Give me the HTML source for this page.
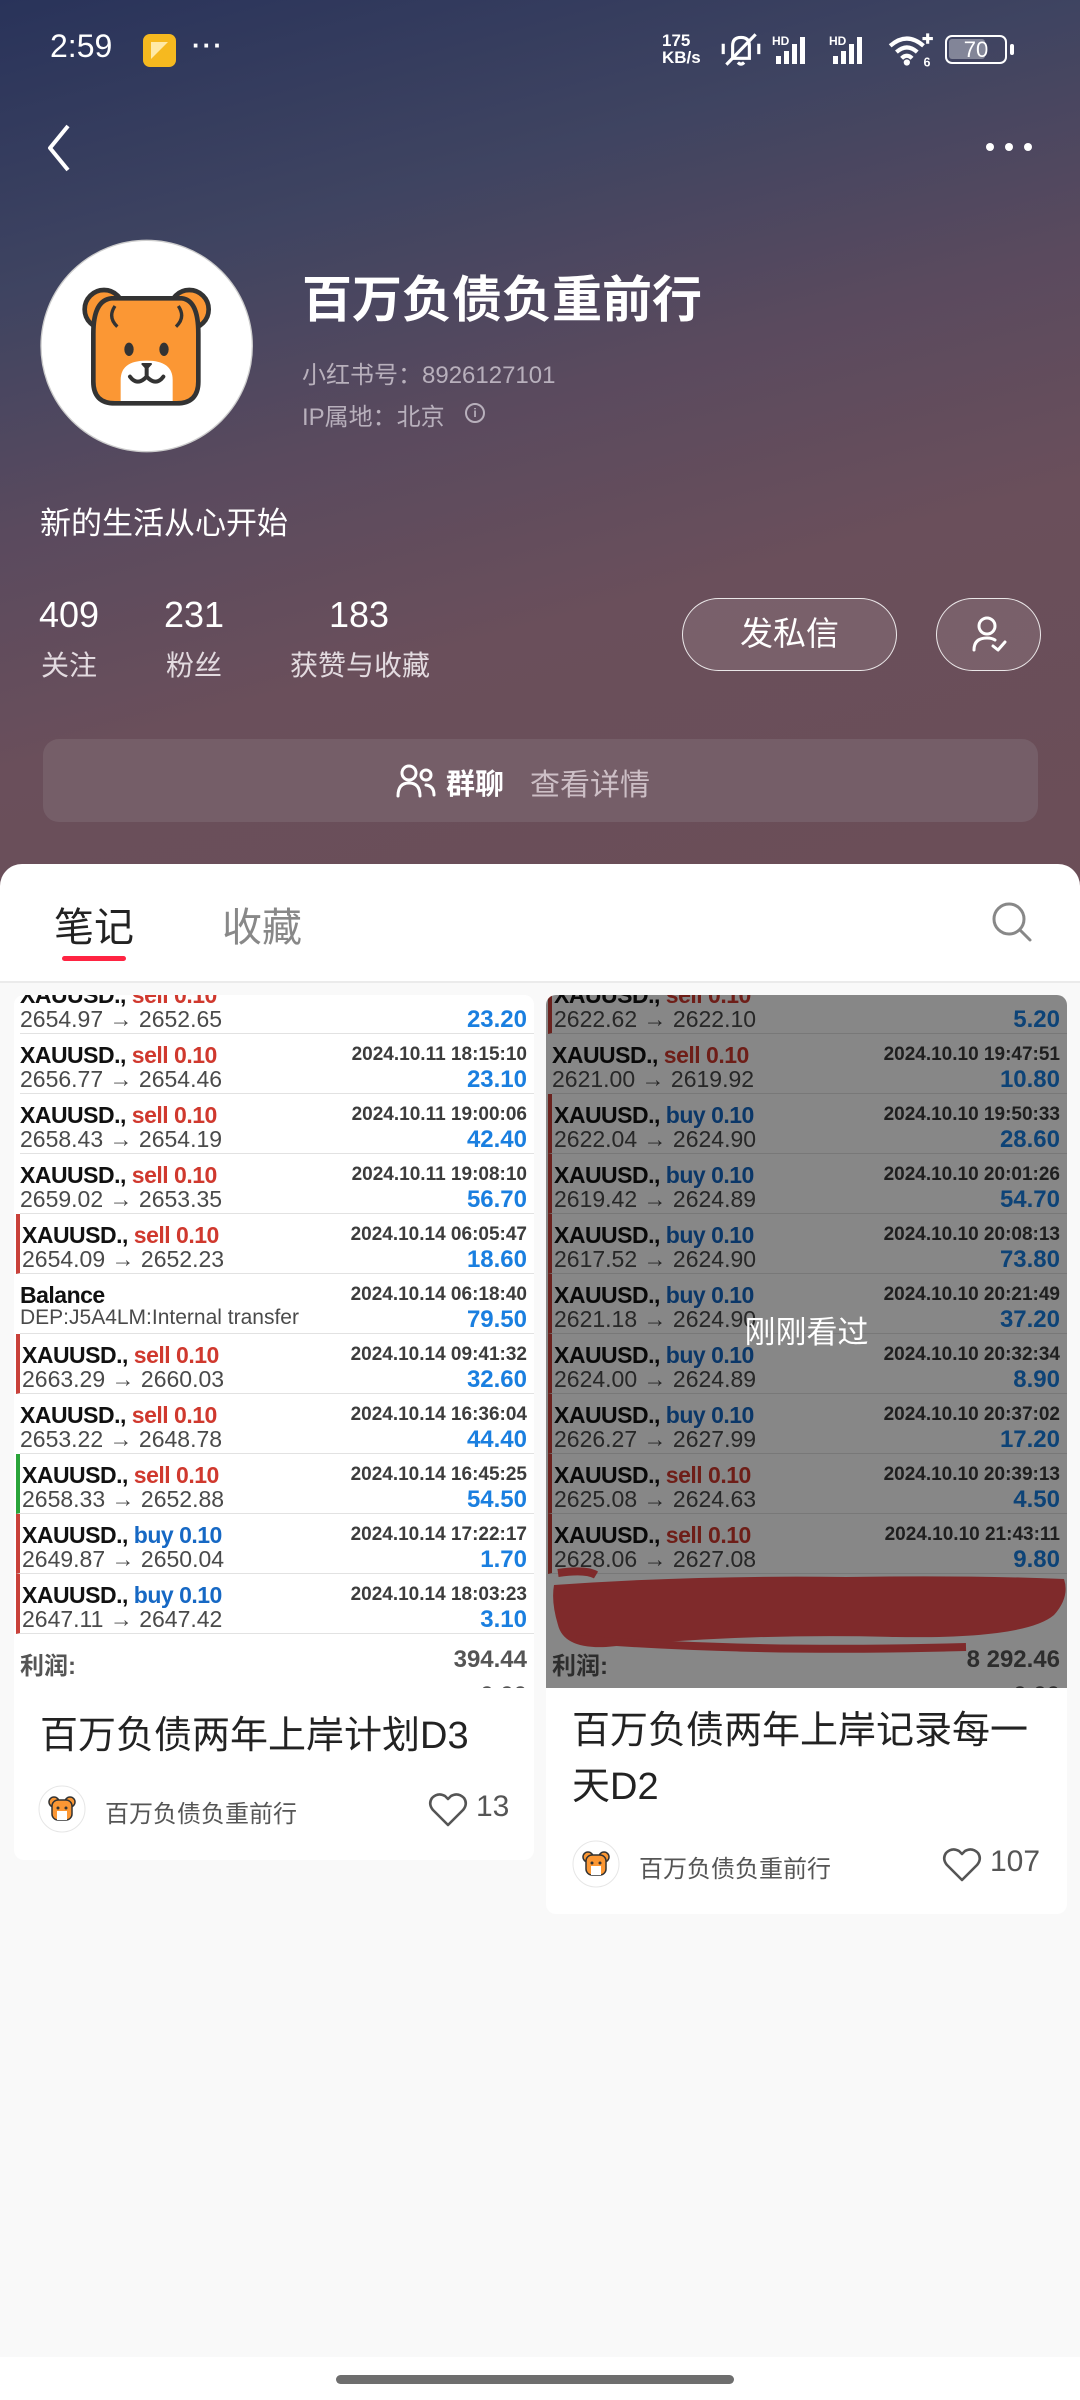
<!DOCTYPE html>
<html><head><meta charset="utf-8">
<style>
*{margin:0;padding:0;box-sizing:border-box}
body{width:1080px;height:2400px;position:relative;overflow:hidden;background:#f9f9f9;font-family:"Liberation Sans","Noto Sans CJK SC",sans-serif}
.hdr{position:absolute;left:0;top:0;width:1080px;height:900px;background:linear-gradient(165deg,#29335a 0%,#3f4461 25%,#5a4a5e 45%,#6a4f5b 65%,#6b4e57 100%)}
.a{position:absolute}
.w{color:#fff}
.card{position:absolute;background:#fff;border-radius:10px;overflow:hidden}
.img{position:absolute;left:0;top:0;width:520px;height:693px;overflow:hidden;background:#fff}
.rows{position:absolute;left:0;top:-21px;width:100%}
.r{position:relative;height:60px;margin-left:6px;border-bottom:1.5px solid #e2e2e2}
.r.bl{border-left:4px solid #c9413a;margin-left:2px}
.r.bg{border-left:4px solid #2aa43a;margin-left:2px}
.t{position:absolute;left:0;top:8px;font:bold 23px "Liberation Sans Narrow","Liberation Sans",sans-serif;color:#111;letter-spacing:-0.5px}
.r.bl .t,.r.bg .t,.r.bl .b,.r.bg .b{left:2px}
.s{color:#d0392e}.u{color:#1668c4}
.d{position:absolute;right:7px;top:10px;font:bold 19px "Liberation Sans Narrow","Liberation Sans",sans-serif;color:#3c3c3c}
.b{position:absolute;left:0;top:32px;font:23px "Liberation Sans",sans-serif;color:#4a4a4a}
.p{position:absolute;right:7px;top:32px;font:bold 24px "Liberation Sans Narrow","Liberation Sans",sans-serif;color:#1a7fe0}
.sum{position:relative;height:60px;margin-left:6px;font:bold 24px "Liberation Sans","Noto Sans CJK SC",sans-serif;color:#555}
.ov{position:absolute;left:0;top:0;width:100%;height:100%;background:rgba(0,0,0,0.47)}
.ttl{position:absolute;left:26px;font:38px "Liberation Sans","Noto Sans CJK SC",sans-serif;color:#222;line-height:56px}
.au{position:absolute;font:24px "Liberation Sans","Noto Sans CJK SC",sans-serif;color:#555}
.lk{position:absolute;font:30px "Liberation Sans",sans-serif;color:#555}
</style></head><body>
<div class="hdr"></div>

<div class="a w" style="left:50px;top:28px;font:32px 'Liberation Sans',sans-serif">2:59</div>
<div class="a" style="left:143px;top:34px;width:33px;height:33px;border-radius:7px;background:#f6b91f"><div style="position:absolute;left:8px;top:8px;width:17px;height:17px;background:#ffe9a6;clip-path:polygon(0 0,100% 0,0 100%)"></div></div>
<div class="a w" style="left:192px;top:30px;font:bold 26px 'Liberation Sans',sans-serif;letter-spacing:2px">···</div>
<div class="a w" style="left:662px;top:32px;font:bold 17px/17px 'Liberation Sans',sans-serif">175<br>KB/s</div>
<svg class="a" style="left:718px;top:30px" width="46" height="40" viewBox="0 0 44 36"><path d="M14 26 L14 14 Q14 6 22 6 Q30 6 30 14 L30 26 Z M19 30 Q22 33 25 30" fill="none" stroke="#fff" stroke-width="3"/><line x1="8" y1="32" x2="36" y2="3" stroke="#fff" stroke-width="3"/><path d="M5 12v10M39 12v10" stroke="#fff" stroke-width="3"/></svg>
<svg class="a" style="left:772px;top:32px" width="110" height="36" viewBox="0 0 110 32"><text x="0" y="11" font-family="Liberation Sans" font-weight="bold" font-size="12" fill="#fff">HD</text><rect x="4" y="22" width="5" height="8" fill="#fff"/><rect x="12" y="17" width="5" height="13" fill="#fff"/><rect x="20" y="10" width="5" height="20" fill="#fff"/><rect x="28" y="3" width="5" height="27" fill="#fff"/><text x="57" y="11" font-family="Liberation Sans" font-weight="bold" font-size="12" fill="#fff">HD</text><rect x="61" y="22" width="5" height="8" fill="#fff"/><rect x="69" y="17" width="5" height="13" fill="#fff"/><rect x="77" y="10" width="5" height="20" fill="#fff"/><rect x="85" y="3" width="5" height="27" fill="#fff"/></svg>
<svg class="a" style="left:886px;top:30px" width="50" height="40" viewBox="0 0 48 36"><path d="M4 14 Q20 0 36 14 M10 20 Q20 11 30 20 M15 26 Q20 21 25 26" fill="none" stroke="#fff" stroke-width="4"/><circle cx="20" cy="30" r="3" fill="#fff"/><path d="M40 2v10M35 7h10" stroke="#fff" stroke-width="3"/><text x="36" y="34" font-family="Liberation Sans" font-weight="bold" font-size="12" fill="#fff">6</text></svg>
<div class="a" style="left:945px;top:35px;width:62px;height:29px;border:2.5px solid #fff;border-radius:7px"><div style="position:absolute;left:2px;top:2px;width:36px;height:20px;background:rgba(255,255,255,.35);border-radius:3px"></div><div style="position:absolute;left:0;top:0;width:58px;text-align:center;font:22px 'Liberation Sans',sans-serif;color:#fff">70</div></div>
<div class="a" style="left:1010px;top:44px;width:4px;height:11px;background:#fff;border-radius:2px"></div>

<svg class="a" style="left:44px;top:122px" width="30" height="52" viewBox="0 0 30 52"><path d="M24 4 L6 26 L24 48" fill="none" stroke="#fff" stroke-width="4" stroke-linejoin="round"/></svg>
<div class="a" style="left:986px;top:143px;width:8px;height:8px;border-radius:4px;background:#fff"></div>
<div class="a" style="left:1005px;top:143px;width:8px;height:8px;border-radius:4px;background:#fff"></div>
<div class="a" style="left:1024px;top:143px;width:8px;height:8px;border-radius:4px;background:#fff"></div>

<svg class="a" style="left:30px;top:230px" width="240" height="240" viewBox="0 0 720 720">
<circle cx="350" cy="348" r="317" fill="#fff" stroke="#ccc" stroke-width="4"/>
<g stroke="#333" stroke-width="14" stroke-linejoin="round">
<circle cx="222" cy="238" r="58" fill="#fb9734"/>
<circle cx="478" cy="238" r="58" fill="#fb9734"/>
<path d="M245 205 L455 205 Q505 210 505 310 L505 455 Q505 520 440 520 L255 520 Q190 520 190 455 L190 310 Q190 210 245 205 Z" fill="#fb9734"/>
</g>
<path d="M272 513 L272 450 Q272 392 350 392 Q428 392 428 450 L428 513 Z" fill="#fff"/>
<ellipse cx="297" cy="358" rx="14" ry="20" fill="#333"/>
<ellipse cx="402" cy="358" rx="14" ry="20" fill="#333"/>
<path d="M337 402 L363 402 L350 416 Z" fill="#333" stroke="#333" stroke-width="6" stroke-linejoin="round"/>
<path d="M350 415 L350 440 M300 440 Q322 470 350 440 Q378 470 400 440" fill="none" stroke="#333" stroke-width="12" stroke-linecap="round"/>
<path d="M255 228 Q232 262 262 290 M445 228 Q468 262 438 290" fill="none" stroke="#333" stroke-width="10"/>
</svg>

<div class="a w" style="left:302px;top:260px;font:bold 50px 'Liberation Sans','Noto Sans CJK SC',sans-serif">百万负债负重前行</div>
<div class="a" style="left:302px;top:355px;font:24px 'Liberation Sans','Noto Sans CJK SC',sans-serif;color:#b8b0bc">小红书号：8926127101</div>
<div class="a" style="left:302px;top:397px;font:24px 'Liberation Sans','Noto Sans CJK SC',sans-serif;color:#b8b0bc">IP属地：北京</div>
<div class="a" style="left:465px;top:403px;width:20px;height:20px;border:2px solid #b8b0bc;border-radius:50%;font:bold 12px/16px 'Liberation Sans';color:#b8b0bc;text-align:center">i</div>

<div class="a w" style="left:40px;top:498px;font:31px 'Liberation Sans','Noto Sans CJK SC',sans-serif">新的生活从心开始</div>

<div class="a w" style="left:39px;top:594px;font:36px 'Liberation Sans',sans-serif">409</div>
<div class="a w" style="left:164px;top:594px;font:36px 'Liberation Sans',sans-serif">231</div>
<div class="a w" style="left:329px;top:594px;font:36px 'Liberation Sans',sans-serif">183</div>
<div class="a" style="left:41px;top:644px;font:28px 'Liberation Sans','Noto Sans CJK SC',sans-serif;color:#e3dbe0">关注</div>
<div class="a" style="left:166px;top:644px;font:28px 'Liberation Sans','Noto Sans CJK SC',sans-serif;color:#e3dbe0">粉丝</div>
<div class="a" style="left:290px;top:644px;font:28px 'Liberation Sans','Noto Sans CJK SC',sans-serif;color:#e3dbe0">获赞与收藏</div>

<div class="a w" style="left:682px;top:598px;width:215px;height:73px;border:1.5px solid rgba(255,255,255,.85);border-radius:37px;background:rgba(255,255,255,.1);text-align:center;font:33px/70px 'Liberation Sans','Noto Sans CJK SC',sans-serif">发私信</div>
<div class="a" style="left:936px;top:598px;width:105px;height:73px;border:1.5px solid rgba(255,255,255,.85);border-radius:37px;background:rgba(255,255,255,.1)"></div>
<svg class="a" style="left:970px;top:614px" width="40" height="42" viewBox="0 0 40 42"><circle cx="17" cy="12" r="8" fill="none" stroke="#fff" stroke-width="3"/><path d="M4 36 Q4 24 17 24 Q22 24 25 26" fill="none" stroke="#fff" stroke-width="3" stroke-linecap="round"/><path d="M23 32 L28 36 L35 28" fill="none" stroke="#fff" stroke-width="3" stroke-linecap="round" stroke-linejoin="round"/></svg>

<div class="a" style="left:43px;top:739px;width:995px;height:83px;background:#755e68;border-radius:16px"></div>
<svg class="a" style="left:396px;top:764px" width="40" height="34" viewBox="0 0 40 34"><circle cx="13" cy="9" r="7" fill="none" stroke="#fff" stroke-width="3"/><path d="M2 32 Q2 19 13 19 Q24 19 24 32" fill="none" stroke="#fff" stroke-width="3" stroke-linecap="round"/><circle cx="30" cy="11" r="5" fill="none" stroke="#fff" stroke-width="3"/><path d="M30 21 Q38 22 38 31" fill="none" stroke="#fff" stroke-width="3" stroke-linecap="round"/></svg>
<div class="a w" style="left:446px;top:761px;font:bold 29px 'Liberation Sans','Noto Sans CJK SC',sans-serif">群聊</div>
<div class="a" style="left:530px;top:760px;font:30px 'Liberation Sans','Noto Sans CJK SC',sans-serif;color:#cdbfc6">查看详情</div>

<div class="a" style="left:0;top:864px;width:1080px;height:117px;background:#fff;border-radius:22px 22px 0 0"></div>
<div class="a" style="left:0;top:981px;width:1080px;height:1.5px;background:#ebebeb"></div>
<div class="a" style="left:54px;top:895px;font:40px 'Liberation Sans','Noto Sans CJK SC',sans-serif;color:#222">笔记</div>
<div class="a" style="left:62px;top:956px;width:64px;height:5px;border-radius:3px;background:#ff2442"></div>
<div class="a" style="left:222px;top:895px;font:40px 'Liberation Sans','Noto Sans CJK SC',sans-serif;color:#888">收藏</div>
<svg class="a" style="left:990px;top:900px" width="44" height="44" viewBox="0 0 44 44"><circle cx="19" cy="19" r="15" fill="none" stroke="#888" stroke-width="3"/><path d="M30 30 L40 40" stroke="#888" stroke-width="3" stroke-linecap="round"/></svg>

<div class="card" style="left:14px;top:995px;width:520px;height:865px">
<div class="img"><div class="rows">
<div class="r"><div class="t">XAUUSD., <span class="s">sell 0.10</span></div><div class="b">2654.97 → 2652.65</div><div class="p">23.20</div></div>
<div class="r"><div class="t">XAUUSD., <span class="s">sell 0.10</span></div><div class="d">2024.10.11 18:15:10</div><div class="b">2656.77 → 2654.46</div><div class="p">23.10</div></div>
<div class="r"><div class="t">XAUUSD., <span class="s">sell 0.10</span></div><div class="d">2024.10.11 19:00:06</div><div class="b">2658.43 → 2654.19</div><div class="p">42.40</div></div>
<div class="r"><div class="t">XAUUSD., <span class="s">sell 0.10</span></div><div class="d">2024.10.11 19:08:10</div><div class="b">2659.02 → 2653.35</div><div class="p">56.70</div></div>
<div class="r bl"><div class="t">XAUUSD., <span class="s">sell 0.10</span></div><div class="d">2024.10.14 06:05:47</div><div class="b">2654.09 → 2652.23</div><div class="p">18.60</div></div>
<div class="r"><div class="t">Balance</div><div class="d">2024.10.14 06:18:40</div><div class="b" style="font-size:21px">DEP:J5A4LM:Internal transfer</div><div class="p">79.50</div></div>
<div class="r bl"><div class="t">XAUUSD., <span class="s">sell 0.10</span></div><div class="d">2024.10.14 09:41:32</div><div class="b">2663.29 → 2660.03</div><div class="p">32.60</div></div>
<div class="r"><div class="t">XAUUSD., <span class="s">sell 0.10</span></div><div class="d">2024.10.14 16:36:04</div><div class="b">2653.22 → 2648.78</div><div class="p">44.40</div></div>
<div class="r bg"><div class="t">XAUUSD., <span class="s">sell 0.10</span></div><div class="d">2024.10.14 16:45:25</div><div class="b">2658.33 → 2652.88</div><div class="p">54.50</div></div>
<div class="r bl"><div class="t">XAUUSD., <span class="u">buy 0.10</span></div><div class="d">2024.10.14 17:22:17</div><div class="b">2649.87 → 2650.04</div><div class="p">1.70</div></div>
<div class="r bl"><div class="t">XAUUSD., <span class="u">buy 0.10</span></div><div class="d">2024.10.14 18:03:23</div><div class="b">2647.11 → 2647.42</div><div class="p">3.10</div></div>
<div class="sum"><div class="a" style="left:0;top:12px">利润:</div><div class="a" style="right:7px;top:12px">394.44</div><div class="a" style="left:0;top:48px">信用:</div><div class="a" style="right:7px;top:48px">0.00</div></div>
</div></div>
<div class="ttl" style="top:713px">百万负债两年上岸计划D3</div>
<svg class="a" style="left:24px;top:790px" width="48" height="48" viewBox="0 0 48 48"><circle cx="24" cy="24" r="23" fill="#fff" stroke="#e6e6e6"/><circle cx="16" cy="17" r="5" fill="#fb9734" stroke="#333" stroke-width="1.5"/><circle cx="32" cy="17" r="5" fill="#fb9734" stroke="#333" stroke-width="1.5"/><rect x="14" y="15" width="20" height="20" rx="6" fill="#fb9734" stroke="#333" stroke-width="1.5"/><rect x="19" y="26" width="10" height="9" fill="#fff"/><circle cx="20" cy="23" r="1.5" fill="#333"/><circle cx="28" cy="23" r="1.5" fill="#333"/></svg>
<div class="au" style="left:91px;top:799px">百万负债负重前行</div>
<svg class="a" style="left:414px;top:797px" width="40" height="36" viewBox="0 0 40 36"><path d="M20 33 L5 18 Q0 12 4 6 Q10 0 17 4 L20 7 L23 4 Q30 0 36 6 Q40 12 35 18 Z" fill="none" stroke="#555" stroke-width="2.6" stroke-linejoin="round"/></svg>
<div class="lk" style="left:462px;top:795px">13</div>
</div>

<div class="card" style="left:546px;top:995px;width:521px;height:919px">
<div class="img" style="width:521px"><div class="rows">
<div class="r bl"><div class="t">XAUUSD., <span class="s">sell 0.10</span></div><div class="b">2622.62 → 2622.10</div><div class="p">5.20</div></div>
<div class="r"><div class="t">XAUUSD., <span class="s">sell 0.10</span></div><div class="d">2024.10.10 19:47:51</div><div class="b">2621.00 → 2619.92</div><div class="p">10.80</div></div>
<div class="r bl"><div class="t">XAUUSD., <span class="u">buy 0.10</span></div><div class="d">2024.10.10 19:50:33</div><div class="b">2622.04 → 2624.90</div><div class="p">28.60</div></div>
<div class="r bl"><div class="t">XAUUSD., <span class="u">buy 0.10</span></div><div class="d">2024.10.10 20:01:26</div><div class="b">2619.42 → 2624.89</div><div class="p">54.70</div></div>
<div class="r bl"><div class="t">XAUUSD., <span class="u">buy 0.10</span></div><div class="d">2024.10.10 20:08:13</div><div class="b">2617.52 → 2624.90</div><div class="p">73.80</div></div>
<div class="r bl"><div class="t">XAUUSD., <span class="u">buy 0.10</span></div><div class="d">2024.10.10 20:21:49</div><div class="b">2621.18 → 2624.90</div><div class="p">37.20</div></div>
<div class="r bl"><div class="t">XAUUSD., <span class="u">buy 0.10</span></div><div class="d">2024.10.10 20:32:34</div><div class="b">2624.00 → 2624.89</div><div class="p">8.90</div></div>
<div class="r bl"><div class="t">XAUUSD., <span class="u">buy 0.10</span></div><div class="d">2024.10.10 20:37:02</div><div class="b">2626.27 → 2627.99</div><div class="p">17.20</div></div>
<div class="r bl"><div class="t">XAUUSD., <span class="s">sell 0.10</span></div><div class="d">2024.10.10 20:39:13</div><div class="b">2625.08 → 2624.63</div><div class="p">4.50</div></div>
<div class="r bl"><div class="t">XAUUSD., <span class="s">sell 0.10</span></div><div class="d">2024.10.10 21:43:11</div><div class="b">2628.06 → 2627.08</div><div class="p">9.80</div></div>
<div class="r" style="border:none"></div>
<div class="sum"><div class="a" style="left:0;top:12px">利润:</div><div class="a" style="right:7px;top:12px">8 292.46</div><div class="a" style="left:0;top:48px">信用:</div><div class="a" style="right:7px;top:48px">0.00</div></div>
</div>
<div class="ov"></div>
<svg class="a" style="left:0;top:572px" width="521" height="90" viewBox="0 0 521 90">
<path d="M8 18 Q150 8 300 10 Q420 8 518 12 Q524 30 508 48 Q480 72 350 70 Q200 66 60 80 Q18 82 12 58 Q5 35 8 18 Z" fill="#7f2a2b"/>
<path d="M12 6 Q40 2 50 8 M30 72 Q200 86 420 80" fill="none" stroke="#7f2a2b" stroke-width="8"/>
</svg>
<div class="a w" style="left:0;top:312px;width:100%;text-align:center;font:31px 'Liberation Sans','Noto Sans CJK SC',sans-serif">刚刚看过</div>
</div>
<div class="ttl" style="top:708px;width:475px">百万负债两年上岸记录每一天D2</div>
<svg class="a" style="left:26px;top:845px" width="48" height="48" viewBox="0 0 48 48"><circle cx="24" cy="24" r="23" fill="#fff" stroke="#e6e6e6"/><circle cx="16" cy="17" r="5" fill="#fb9734" stroke="#333" stroke-width="1.5"/><circle cx="32" cy="17" r="5" fill="#fb9734" stroke="#333" stroke-width="1.5"/><rect x="14" y="15" width="20" height="20" rx="6" fill="#fb9734" stroke="#333" stroke-width="1.5"/><rect x="19" y="26" width="10" height="9" fill="#fff"/><circle cx="20" cy="23" r="1.5" fill="#333"/><circle cx="28" cy="23" r="1.5" fill="#333"/></svg>
<div class="au" style="left:93px;top:854px">百万负债负重前行</div>
<svg class="a" style="left:396px;top:852px" width="40" height="36" viewBox="0 0 40 36"><path d="M20 33 L5 18 Q0 12 4 6 Q10 0 17 4 L20 7 L23 4 Q30 0 36 6 Q40 12 35 18 Z" fill="none" stroke="#555" stroke-width="2.6" stroke-linejoin="round"/></svg>
<div class="lk" style="left:444px;top:850px">107</div>
</div>

<div class="a" style="left:0;top:2357px;width:1080px;height:43px;background:#fff"></div>
<div class="a" style="left:336px;top:2375px;width:398px;height:9px;border-radius:5px;background:#6e6e6e"></div>
</body></html>
